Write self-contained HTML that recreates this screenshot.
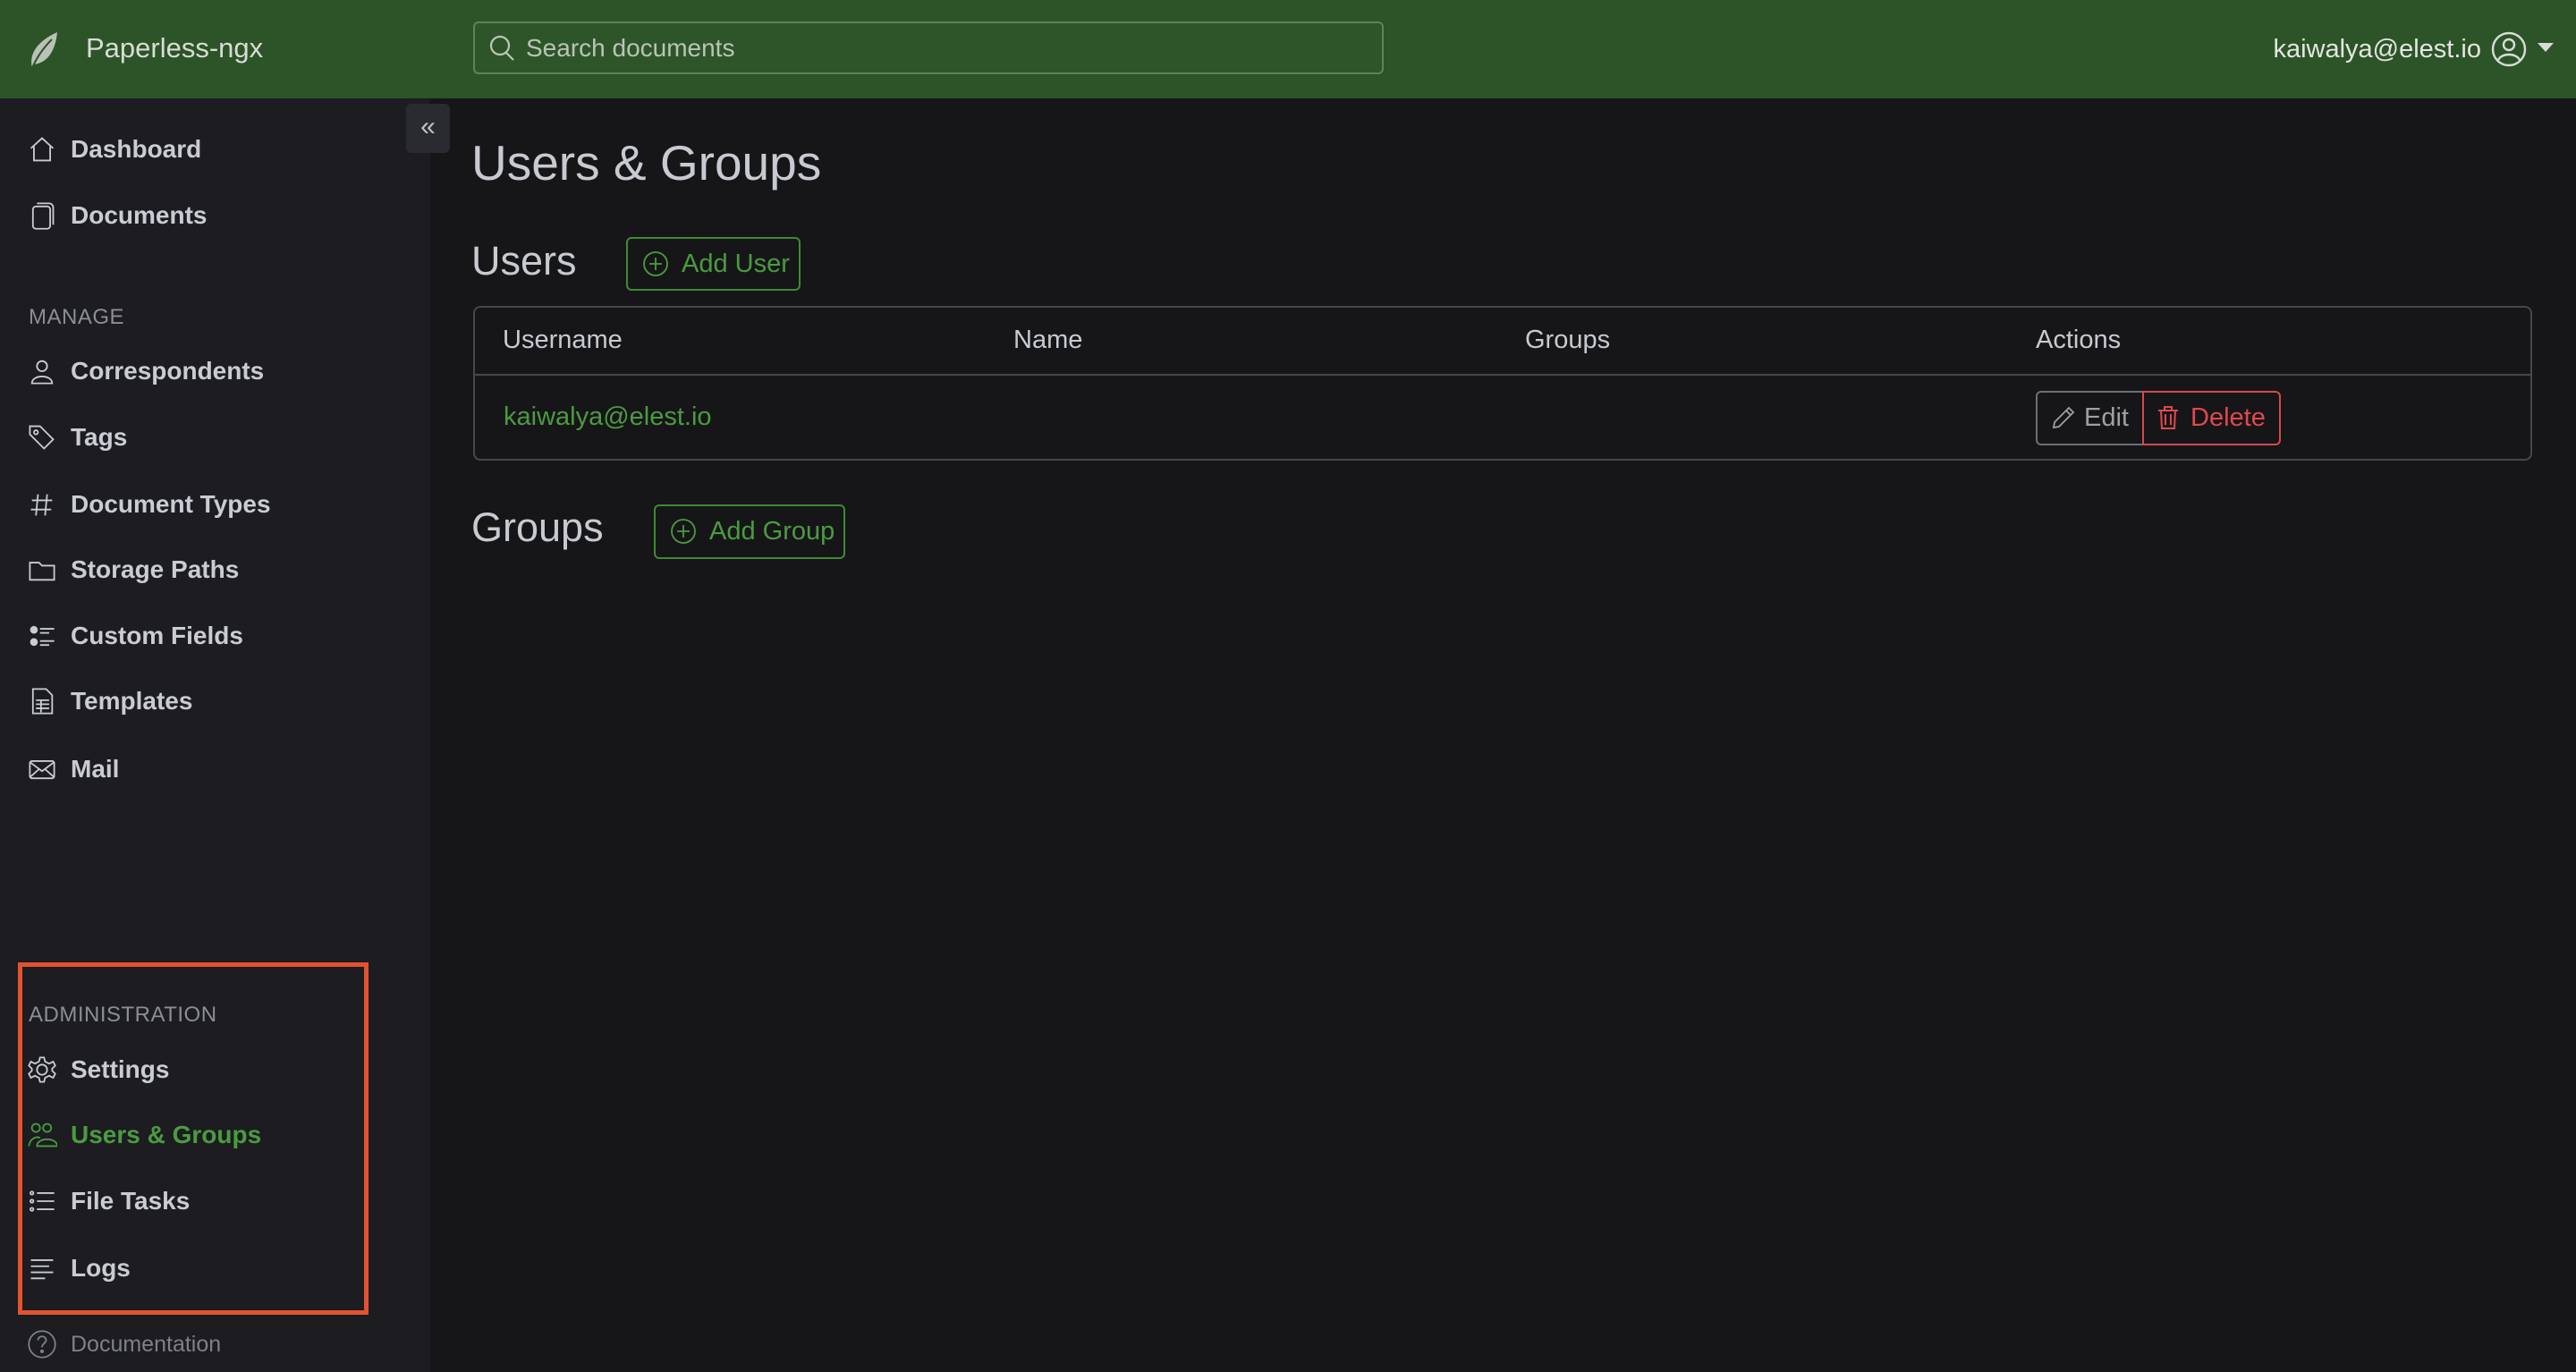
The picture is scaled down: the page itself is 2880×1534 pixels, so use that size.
<!DOCTYPE html>
<html><head><meta charset="utf-8"><style>
*{box-sizing:border-box;margin:0;padding:0}
body{width:2880px;height:1534px;background:#161618;font-family:"Liberation Sans",sans-serif;color:#c7cad1;position:relative;overflow:hidden}
.abs{position:absolute}
.nav{left:0;top:0;width:2880px;height:110px;background:#2c5428}
.side{left:0;top:110px;width:481px;height:1424px;background:#1c1c21}
.item{position:absolute;left:31px;font-size:28px;font-weight:bold;color:#c9ccd3;line-height:40px;height:40px}
.item svg{position:absolute;left:-1px;top:3px;width:34px;height:34px;fill:none;stroke:#c9ccd3;stroke-width:1.6}
.item span{position:absolute;left:48px;white-space:nowrap}
.hdr{position:absolute;left:32px;font-size:24px;color:#8a8e96;letter-spacing:0.5px}
.btn{position:absolute;border:2px solid #3f8a35;border-radius:6px;color:#4b9b40;font-size:29px;line-height:56px;padding-left:60px}
.btn svg{position:absolute;left:16px;top:13px;width:30px;height:30px;fill:none;stroke:#4b9b40;stroke-width:1.8}
</style></head><body>
<div class="abs nav"></div>
<svg class="abs" style="left:30px;top:32px" width="40" height="48" viewBox="0 0 40 48"><path d="M6 44 C2 28 12 14 34 4 C32 24 24 38 8 40 Z" fill="#b9c2b6"/><path d="M6 44 C12 30 20 20 28 12" stroke="#2c5428" stroke-width="2" fill="none"/></svg>
<div class="abs" style="left:96px;top:36px;font-size:31px;color:#d8dcd6">Paperless-ngx</div>
<div class="abs" style="left:529px;top:24px;width:1018px;height:59px;border:2px solid #5f8259;border-radius:6px;background:#2e5529"></div>
<svg class="abs" style="left:546px;top:38px" width="32" height="32" viewBox="0 0 32 32" fill="none" stroke="#bcc7b8" stroke-width="2.2"><circle cx="13" cy="13" r="10"/><path d="M20 21 L28 29"/></svg>
<div class="abs" style="left:588px;top:38px;font-size:28px;color:#b9c4b5">Search documents</div>
<div class="abs" style="right:106px;top:39px;font-size:29px;color:#e3e6e1">kaiwalya@elest.io</div>
<svg class="abs" style="left:2785px;top:35px" width="40" height="40" viewBox="0 0 40 40" fill="none" stroke="#d8dcd6" stroke-width="2.4"><circle cx="20" cy="20" r="18"/><circle cx="20" cy="15" r="6"/><path d="M8 32 C12 24 28 24 32 32"/></svg>
<svg class="abs" style="left:2837px;top:48px" width="18" height="12"><path d="M0 0 L18 0 L9 10 Z" fill="#d8dcd6"/></svg>

<div class="abs side"></div>
<div class="abs" style="left:454px;top:116px;width:49px;height:55px;background:#2a2b30;border-radius:6px;color:#bfc2c8;font-size:30px;text-align:center;line-height:52px">«</div>

<div class="item" style="top:147px"><svg viewBox="0 0 30 30"><path d="M4 14 L15 4 L26 14 M7 12 V26 H23 V12"/></svg><span>Dashboard</span></div>
<div class="item" style="top:221px"><svg viewBox="0 0 30 30"><rect x="6" y="6" width="17" height="22" rx="3"/><path d="M10 3 H22 a4 4 0 0 1 4 4 V24"/></svg><span>Documents</span></div>
<div class="hdr" style="top:341px">MANAGE</div>
<div class="item" style="top:395px"><svg viewBox="0 0 30 30"><circle cx="15" cy="10" r="5"/><path d="M5 27 C5 18 25 18 25 27 Z"/></svg><span>Correspondents</span></div>
<div class="item" style="top:469px"><svg viewBox="0 0 30 30"><path d="M3 4 H13 L26 17 L17 26 L3 12 Z"/><circle cx="9" cy="10" r="2"/></svg><span>Tags</span></div>
<div class="item" style="top:544px"><svg viewBox="0 0 30 30"><path d="M11 5 L9 26 M20 5 L18 26 M5 11 H25 M4 20 H24"/></svg><span>Document Types</span></div>
<div class="item" style="top:617px"><svg viewBox="0 0 30 30"><path d="M3 8 H12 L15 11 H27 V25 H3 Z"/></svg><span>Storage Paths</span></div>
<div class="item" style="top:691px"><svg viewBox="0 0 30 30"><circle cx="7" cy="9" r="3" fill="#c9ccd3"/><circle cx="7" cy="21" r="3" fill="#c9ccd3"/><path d="M13 8 H27 M13 12 H22 M13 20 H27 M13 24 H22"/></svg><span>Custom Fields</span></div>
<div class="item" style="top:764px"><svg viewBox="0 0 30 30"><path d="M6 3 H19 L25 9 V27 H6 Z M9 14 H22 M9 18 H22 M9 22 H22 M14 14 V26"/></svg><span>Templates</span></div>
<div class="item" style="top:840px"><svg viewBox="0 0 30 30"><rect x="3" y="7" width="24" height="17" rx="2"/><path d="M3 8 L15 17 L27 8 M3 23 L12 15 M27 23 L18 15"/></svg><span>Mail</span></div>

<div class="abs" style="left:20px;top:1076px;width:392px;height:394px;border:5px solid #e4532f"></div>
<div class="hdr" style="top:1121px">ADMINISTRATION</div>
<div class="item" style="top:1176px"><svg viewBox="0 0 30 30"><circle cx="15" cy="15" r="5"/><path d="M13 3 H17 L18 7 L22 9 L26 7 L28 11 L25 14 V16 L28 19 L26 23 L22 21 L18 23 L17 27 H13 L12 23 L8 21 L4 23 L2 19 L5 16 V14 L2 11 L4 7 L8 9 L12 7 Z"/></svg><span>Settings</span></div>
<div class="item" style="top:1249px;color:#4b9b40"><svg viewBox="0 0 30 30" style="stroke:#4b9b40"><circle cx="9" cy="8" r="4"/><circle cx="20" cy="8" r="4"/><path d="M2 26 C3 18 10 16 13 18 M10 26 C10 17 30 17 30 26 Z"/></svg><span>Users &amp; Groups</span></div>
<div class="item" style="top:1323px"><svg viewBox="0 0 30 30"><circle cx="5" cy="7" r="1.5"/><circle cx="5" cy="15" r="1.5"/><circle cx="5" cy="23" r="1.5"/><path d="M10 7 H27 M10 15 H27 M10 23 H27"/></svg><span>File Tasks</span></div>
<div class="item" style="top:1398px"><svg viewBox="0 0 30 30"><path d="M4 7 H26 M4 13 H22 M4 19 H26 M4 25 H18"/></svg><span>Logs</span></div>
<div class="item" style="top:1483px;font-weight:normal;font-size:25px;color:#7d8189"><svg viewBox="0 0 30 30" style="stroke:#7d8189"><circle cx="15" cy="15" r="13"/><path d="M11 11 C11 6 19 6 19 11 C19 14 15 14 15 18"/><circle cx="15" cy="22" r="1" fill="#7d8189"/></svg><span>Documentation</span></div>

<div class="abs" style="left:527px;top:150px;font-size:55px;color:#c7cad1">Users &amp; Groups</div>
<div class="abs" style="left:527px;top:266px;font-size:45px;color:#c7cad1">Users</div>
<div class="btn" style="left:700px;top:265px;width:195px;height:60px"><svg viewBox="0 0 30 30"><circle cx="15" cy="15" r="13"/><path d="M15 8 V22 M8 15 H22"/></svg>Add User</div>

<div class="abs" style="left:529px;top:342px;width:2302px;height:173px;border:2px solid #46474c;border-radius:8px"></div>
<div class="abs" style="left:529px;top:418px;width:2302px;height:2px;background:#46474c"></div>
<div class="abs" style="left:562px;top:364px;font-size:29px">Username</div>
<div class="abs" style="left:1133px;top:364px;font-size:29px">Name</div>
<div class="abs" style="left:1705px;top:364px;font-size:29px">Groups</div>
<div class="abs" style="left:2276px;top:364px;font-size:29px">Actions</div>
<div class="abs" style="left:563px;top:450px;font-size:29px;color:#4b9b40">kaiwalya@elest.io</div>
<div class="abs" style="left:2276px;top:437px;width:121px;height:61px;border:2px solid #6c6f76;border-radius:6px 0 0 6px;color:#9da0a7;font-size:29px;line-height:57px;padding-left:52px">Edit</div>
<svg class="abs" style="left:2292px;top:452px" width="30" height="30" viewBox="0 0 30 30" fill="none" stroke="#9da0a7" stroke-width="1.8"><path d="M21 4 L26 9 L10 25 L4 26 L5 20 Z M18 7 L23 12"/></svg>
<div class="abs" style="left:2395px;top:437px;width:155px;height:61px;border:2px solid #d8484c;border-radius:0 6px 6px 0;color:#e0484d;font-size:29px;line-height:57px;padding-left:52px">Delete</div>
<svg class="abs" style="left:2410px;top:452px" width="28" height="30" viewBox="0 0 28 30" fill="none" stroke="#e0484d" stroke-width="2"><path d="M3 7 H25 M10 7 V3 H18 V7 M6 7 L7 27 H21 L22 7 M11 11 V23 M17 11 V23"/></svg>

<div class="abs" style="left:527px;top:564px;font-size:45px;color:#c7cad1">Groups</div>
<div class="btn" style="left:731px;top:564px;width:214px;height:61px"><svg viewBox="0 0 30 30"><circle cx="15" cy="15" r="13"/><path d="M15 8 V22 M8 15 H22"/></svg>Add Group</div>
</body></html>
